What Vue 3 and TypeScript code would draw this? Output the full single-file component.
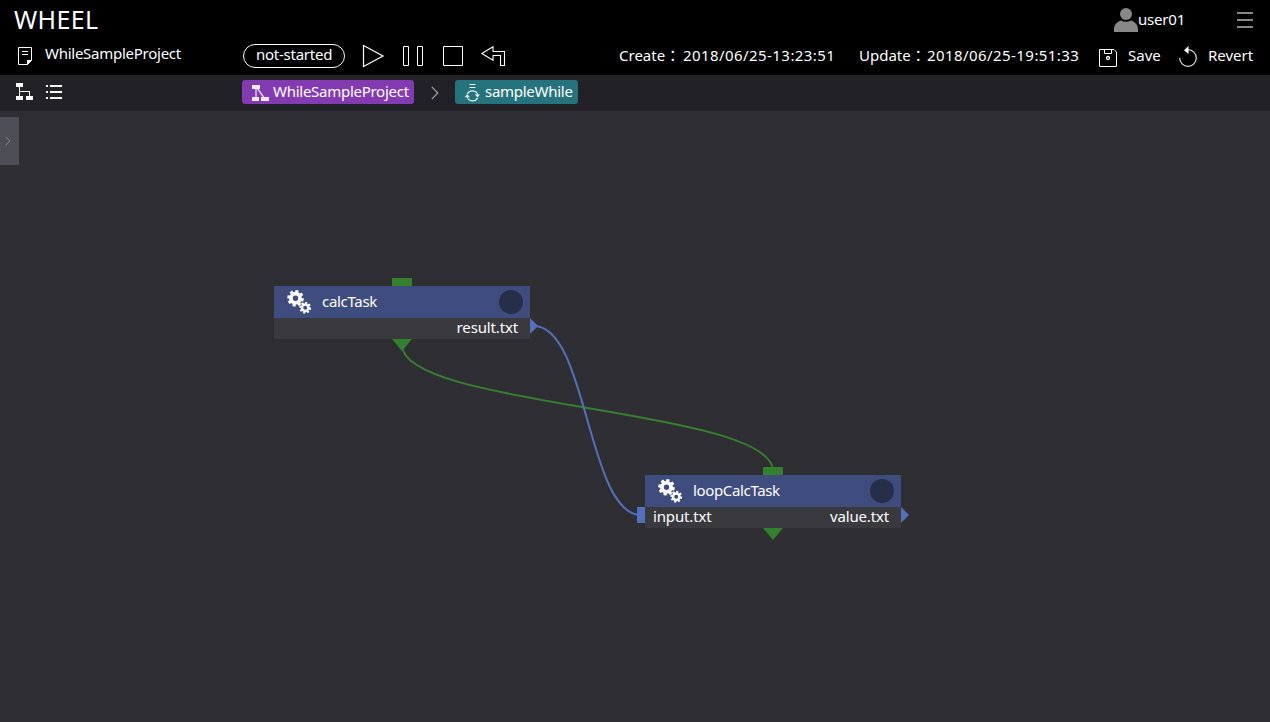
<script setup lang="ts">
interface TaskNode {
  name: string
  x: number
  y: number
  input?: string
  output: string
  kind: string
}

const nodes: TaskNode[] = [
  { name: 'calcTask', x: 274, y: 175, output: 'result.txt', kind: 'calc' },
  { name: 'loopCalcTask', x: 645, y: 364, input: 'input.txt', output: 'value.txt', kind: 'loop' },
]

// Closed outline of an eight-toothed gear followed by its round hole.
function gear(cx: number, cy: number, outer: number, inner: number, hole: number): string {
  const points: string[] = []
  for (let i = 0; i < 8; i++) {
    const steps: [number, number][] = [[-0.28, inner], [-0.18, outer], [0.18, outer], [0.28, inner]]
    for (const [offset, radius] of steps) {
      const a = (i * Math.PI) / 4 + offset + 0.2
      points.push(`${(cx + radius * Math.cos(a)).toFixed(2)} ${(cy + radius * Math.sin(a)).toFixed(2)}`)
    }
  }
  return `M${points.join('L')}ZM${cx - hole} ${cy}a${hole} ${hole} 0 1 0 ${hole * 2} 0a${hole} ${hole} 0 1 0 ${-hole * 2} 0Z`
}

const gears = gear(8.5, 8.3, 8.4, 6.3, 2.7) + gear(18.2, 17.7, 6, 4.3, 2)
</script>

<template>
  <div class="app">
    <header class="header">
      <div class="title-row">
        <h1 class="logo">WHEEL</h1>
        <div class="user">
          <svg class="avatar" width="24" height="24" viewBox="0 0 24 24">
            <circle cx="12" cy="6" r="6" />
            <path d="M0 24v-2.5C0 16.5 3 14 7 12.5c3 1.6 7 1.6 10 0 4 1.5 7 4 7 9V24Z" />
          </svg>
          <span class="user-name">user01</span>
        </div>
        <div class="menu"><i></i><i></i><i></i></div>
      </div>
      <div class="tool-row">
        <svg class="doc" width="14" height="18" viewBox="0 0 14 18">
          <path d="M9.5 17.5H.5V.5h13v13Z" fill="none" stroke="#fff" />
          <path d="M9 18v-5h5ZM4 4h6v1H4ZM4 7h6v1H4Z" fill="#fff" />
        </svg>
        <span class="project-name">WhileSampleProject</span>
        <div class="status"><span>not-started</span></div>
        <svg class="controls" width="146" height="24" viewBox="0 0 146 24" fill="none" stroke="#fff">
          <path d="M1.5 1.5v21L21 12Z" stroke-width="1.2" />
          <path d="M41.5 2.5h5v19h-5ZM55.500 2.500h5v19h-5ZM81.500 2.500h19v19h-19Z" />
          <path d="M119.800 9.500 131 2.800V7.500H142.500V21.500H138.500V11.500H131V16.200Z" stroke-width="1.1" />
        </svg>
        <div class="stamp created">
          <span class="stamp-label">Create：</span><time>2018/06/25-13:23:51</time>
        </div>
        <div class="stamp updated">
          <span class="stamp-label">Update：</span><time>2018/06/25-19:51:33</time>
        </div>
        <svg class="save-icon" width="18" height="18" viewBox="0 0 18 18">
          <path d="M.5.5H15L17.500 3V17.500H.5ZM5.500.5v4h7v-4" fill="none" stroke="#fff" />
          <circle cx="9" cy="9" r="1.500" fill="none" stroke="#fff" stroke-width="1.300" />
        </svg>
        <span class="save">Save</span>
        <svg class="revert-icon" width="18" height="22" viewBox="0 0 18 22">
          <path d="M.7 12a8.300 8.300 0 1 0 8.300-8.300" fill="none" stroke="#ddd" stroke-width="1.200" />
          <path d="M9.500 0v8L5 4.200Z" fill="#fff" />
        </svg>
        <span class="revert">Revert</span>
      </div>
    </header>

    <nav class="nav">
      <svg class="tree-icon" width="17" height="17" viewBox="0 0 17 17">
        <path d="M0 0h7v4H4v4h10v5h3v4h-7v-4h3V9H4v4h3v4H0v-4h3V4H0Z" fill="#fff" />
      </svg>
      <svg class="list-icon" width="16" height="14" viewBox="0 0 16 14">
        <path d="M0 0h2v2H0ZM4 0h12v2H4ZM0 6h2v2H0ZM4 6h12v2H4ZM0 12h2v2H0ZM4 12h12v2H4Z" fill="#fff" />
      </svg>
      <div class="crumb crumb-root">
        <svg width="17" height="17" viewBox="0 0 17 17">
          <path d="M4 3v10M5 3l8 11" stroke="#eadcf1" stroke-width="1.300" />
          <path d="M0 0h8v4H0ZM0 12h7v4H0ZM9 12h8v4H9Z" fill="#f4ecf8" />
        </svg>
        <span>WhileSampleProject</span>
      </div>
      <svg class="chevron" width="8" height="14" viewBox="0 0 8 14">
        <path d="m.8.8 6 6.200-6 6.200" fill="none" stroke="#aaa" stroke-width="1.100" />
      </svg>
      <div class="crumb crumb-loop">
        <svg width="16" height="18" viewBox="0 0 16 18" fill="none" stroke="#e5f0f1">
          <path d="M5.500 .5h6M5.500 3.500h6" />
          <path d="M3.300 10.200a5.500 5.500 0 0 1 10.400.8M13.500 13.700a5.500 5.500 0 0 1-10.300-.8" stroke-width="1.200" />
          <path d="M10.800 10.500H16L13.600 13.500ZM.6 13.200h5.400L3.200 10.200Z" fill="#e5f0f1" stroke="none" />
        </svg>
        <span>sampleWhile</span>
      </div>
    </nav>

    <main class="canvas">
      <div class="drawer-tab">
        <svg width="6" height="10" viewBox="0 0 6 10">
          <path d="m.8.8 4 4.200-4 4.200" fill="none" stroke="#85858a" />
        </svg>
      </div>
      <section v-for="node in nodes" :key="node.name" class="node" :class="node.kind">
        <div class="node-head">
          <svg class="gears" width="25" height="25" viewBox="0 0 25 25">
            <path :d="gears" fill="#fff" fill-rule="evenodd" />
          </svg>
          <span class="node-name">{{ node.name }}</span>
          <i class="state"></i>
        </div>
        <div class="node-body">
          <span class="input-file">{{ node.input }}</span>
          <span class="output-file">{{ node.output }}</span>
        </div>
      </section>
      <svg class="links" width="1270" height="611" viewBox="0 0 1270 611">
        <g v-for="node in nodes" :key="node.name" :transform="`translate(${node.x} ${node.y})`">
          <path d="M118-8h20V0h-20ZM118 53h20l-10 12Z" fill="#35802f" />
          <path d="M256 32v16l8-8Z" fill="#5370bc" />
          <path v-if="node.input" d="M-8 32h8v16h-8Z" fill="#5370bc" />
        </g>
        <path d="M402 234C402 297 773 297 773 360" fill="none" stroke="#35802f" stroke-width="2" />
        <path d="M534 215C587.500 215 587.500 404 641 404" fill="none" stroke="#5370bc" stroke-width="2" />
      </svg>
    </main>
  </div>
</template>

<style>
body {
  margin: 0;
  background: #2f2e33;
}
</style>

<style scoped>
.app {
  width: 1270px;
  height: 722px;
  overflow: hidden;
  background: #2f2e33;
  color: #fff;
  font: 15px/20px "Noto Sans", "Noto Sans CJK JP", sans-serif;
  white-space: nowrap;
}
svg {
  display: block;
  flex: none;
}
span {
  flex: none;
}
.header {
  height: 75px;
  background: #000;
}
.title-row {
  display: flex;
  height: 40px;
}
.logo {
  width: 1100px;
  margin: 0 0 0 14px;
  font-size: 25px;
  line-height: 38px;
  font-weight: 400;
  letter-spacing: 0.35px;
}
.user {
  display: flex;
  width: 123px;
  padding-top: 8px;
  align-items: flex-start;
}
.avatar {
  fill: #888;
}
.user-name {
  margin-top: 1px;
  letter-spacing: -0.2px;
}
.menu {
  width: 16px;
  padding-top: 12px;
}
.menu i {
  display: block;
  height: 2px;
  margin-bottom: 5px;
  background: #888;
}
.tool-row {
  display: flex;
  height: 35px;
  align-items: flex-start;
}
.doc {
  margin: 7px 13px 0 18px;
}
.project-name {
  width: 198px;
  margin-top: 3px;
  letter-spacing: -0.26px;
}
.status {
  box-sizing: border-box;
  width: 102px;
  height: 24px;
  margin: 4px 17px 0 0;
  padding-left: 12px;
  border: 1px solid #fff;
  border-radius: 12px;
  line-height: 19px;
  letter-spacing: -0.25px;
}
.controls {
  margin-top: 4px;
}
.stamp {
  display: flex;
  width: 240px;
  margin-top: 5px;
}
.created {
  margin-left: 111px;
}
.stamp-label {
  width: 64px;
}
.updated .stamp-label {
  width: 68px;
}
.stamp time {
  letter-spacing: 0.43px;
}
.save-icon {
  margin-top: 9px;
}
.save {
  width: 51px;
  margin: 5px 0 0 11px;
}
.revert-icon {
  margin-top: 6px;
}
.revert {
  margin: 5px 0 0 11px;
}
.nav {
  display: flex;
  height: 36px;
  align-items: flex-start;
  background: #222226;
}
.tree-icon {
  margin: 8px 13px 0 16px;
}
.list-icon {
  margin-top: 10px;
}
.crumb {
  display: flex;
  box-sizing: border-box;
  height: 24px;
  margin-top: 5px;
  border-radius: 3px;
  letter-spacing: -0.27px;
}
.crumb span {
  line-height: 23px;
}
.crumb-root {
  width: 172px;
  margin-left: 180px;
  padding-left: 10px;
  background: #833bb2;
}
.crumb-root svg {
  margin: 5px 4px 0 0;
}
.chevron {
  margin: 11px 16px 0 17px;
}
.crumb-loop {
  width: 123px;
  padding-left: 9px;
  background: #25747d;
}
.crumb-loop svg {
  margin: 4px 5px 0 0;
}
.canvas {
  position: relative;
  height: 611px;
  padding-top: 6px;
  box-sizing: border-box;
}
.drawer-tab {
  display: flex;
  width: 19px;
  height: 48px;
  padding-left: 5px;
  box-sizing: border-box;
  align-items: center;
  background: #4d4d55;
}
.node {
  position: absolute;
  width: 256px;
  height: 53px;
}
.calc {
  left: 274px;
  top: 175px;
}
.loop {
  left: 645px;
  top: 364px;
}
.node-head {
  display: flex;
  height: 32px;
  align-items: center;
  background: #3f4c7e;
}
.gears {
  margin: 0 10px 0 13px;
}
.node-name {
  width: 177px;
  padding-bottom: 2px;
  letter-spacing: -0.3px;
}
.loop .node-name {
  letter-spacing: -0.35px;
}
.state {
  width: 24px;
  height: 24px;
  border-radius: 50%;
  background: #272e4a;
}
.node-body {
  display: flex;
  height: 21px;
  padding: 0 12px 0 8px;
  justify-content: space-between;
  background: #3a393e;
  line-height: 18px;
  letter-spacing: -0.15px;
}
.links {
  position: absolute;
  inset: 0;
}
</style>
